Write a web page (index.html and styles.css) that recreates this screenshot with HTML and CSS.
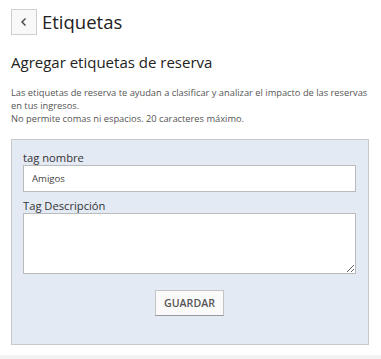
FILE: index.html
```html
<!DOCTYPE html>
<html lang="es">
<head>
<meta charset="utf-8">
<title>Etiquetas</title>
<link rel="stylesheet" href="styles.css">
</head>
<body>
<div class="page">
  <header class="topbar">
    <button class="back" type="button" aria-label="Volver">
      <svg width="8" height="10" viewBox="0 0 8 10"><path d="M5.5 1.5 L2 5 L5.5 8.5" fill="none" stroke="#444" stroke-width="1.4"/></svg>
    </button>
    <h1 class="title">Etiquetas</h1>
  </header>
  <h2 class="subtitle">Agregar etiquetas de reserva</h2>
  <p class="help">Las etiquetas de reserva te ayudan a clasificar y analizar el impacto de las reservas en tus ingresos.<br>No permite comas ni espacios. 20 caracteres máximo.</p>
  <form class="panel">
    <label class="lbl" for="n">tag nombre</label>
    <input class="field" id="n" type="text" value="Amigos">
    <label class="lbl" for="d">Tag Descripción</label>
    <textarea class="field area" id="d"></textarea>
    <div class="actions"><button class="save" type="button">GUARDAR</button></div>
  </form>
</div>
<div class="strip"></div>
</body>
</html>
```
FILE: styles.css
```css
* { box-sizing: border-box; }
html, body { margin: 0; padding: 0; background: #fff; }
body { font-family: "Open Sans", sans-serif; color: #333; width: 381px; height: 359px; overflow: hidden; position: relative; }
.page { padding: 9px 12px 0 11px; }
.topbar { display: flex; align-items: center; gap: 5px; height: 26px; }
.back { width: 26px; height: 26px; border: 1px solid #cfcfcf; background: #f8f8f8; display: flex; align-items: center; justify-content: center; padding: 0; margin: 0; }
.title { font-size: 18.5px; font-weight: 400; margin: 0; line-height: 26px; color: #222; }
.subtitle { font-size: 15px; font-weight: 400; margin: 17px 0 0; line-height: 20px; color: #222; }
.help { font-size: 9.3px; line-height: 13px; color: #555; margin: 14px 0 0; }
.panel { margin-top: 14px; background: #e4eaf4; border: 1px solid #c8c8c8; padding: 11px 12px 27px 11px; display: flex; flex-direction: column; height: 206px; }
.lbl { font-size: 11.2px; line-height: 14px; color: #333; }
.field { display: block; width: 100%; height: 27px; border: 1px solid #bbb; background: #fff; font-family: "Open Sans", sans-serif; font-size: 9.6px; color: #444; padding: 0 8px; margin: 0 0 7px; border-radius: 0; outline: none; }
.area { height: 61px; resize: vertical; margin-bottom: 16px; }
.actions { display: flex; justify-content: center; }
.save { width: 69px; height: 26px; background: #fafafa; border: 1px solid #c4c4c4; border-bottom-color: #999; font-family: "Open Sans", sans-serif; font-weight: 600; font-size: 10.6px; color: #555; padding: 0; }
.strip { position: absolute; left: 0; right: 0; bottom: 0; height: 4px; background: #f2f2f2; }
```
